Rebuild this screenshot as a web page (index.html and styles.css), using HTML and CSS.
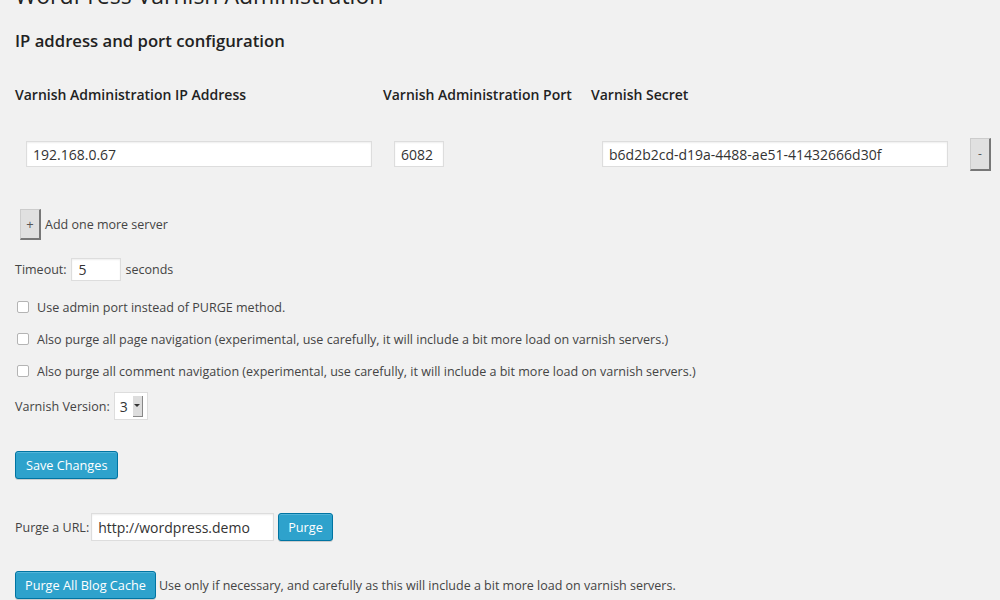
FILE: index.html
```html
<!DOCTYPE html>
<html>
<head>
<meta charset="utf-8">
<link rel="stylesheet" href="styles.css">
</head>
<body>
<div class="wrap">
  <h2 class="page-title">WordPress Varnish Administration</h2>
  <h3 class="section-title">IP address and port configuration</h3>
  <div class="servers">
    <div class="th">Varnish Administration IP Address</div>
    <div class="th">Varnish Administration Port</div>
    <div class="th">Varnish Secret</div>
    <div class="th"></div>
    <div class="td"><input class="field ip" type="text" value="192.168.0.67"></div>
    <div class="td"><input class="field port" type="text" value="6082"></div>
    <div class="td"><input class="field secret" type="text" value="b6d2b2cd-d19a-4488-ae51-41432666d30f"></div>
    <div class="td"><button class="gray-btn minus">-</button></div>
  </div>
  <div class="add-row">
    <button class="gray-btn plus">+</button>
    <span>Add one more server</span>
  </div>
  <div class="timeout-row">
    <span>Timeout:</span>
    <input class="field timeout" type="text" value="5">
    <span class="after">seconds</span>
  </div>
  <label class="check-row"><span class="box"></span><span class="opt">Use admin port instead of PURGE method.</span></label>
  <label class="check-row"><span class="box"></span><span class="opt">Also purge all page navigation (experimental, use carefully, it will include a bit more load on varnish servers.)</span></label>
  <label class="check-row"><span class="box"></span><span class="opt">Also purge all comment navigation (experimental, use carefully, it will include a bit more load on varnish servers.)</span></label>
  <div class="version-row">
    <span class="opt">Varnish Version:</span>
    <div class="select"><span class="val">3</span><span class="arrow"><span class="tri"></span></span></div>
  </div>
  <div class="save-row"><button class="blue-btn">Save Changes</button></div>
  <div class="purge-row">
    <span>Purge a URL:</span>
    <input class="field url" type="text" value="http://wordpress.demo">
    <button class="blue-btn">Purge</button>
  </div>
  <div class="purge-all-row">
    <button class="blue-btn">Purge All Blog Cache</button>
    <span>Use only if necessary, and carefully as this will include a bit more load on varnish servers.</span>
  </div>
</div>
</body>
</html>
```
FILE: styles.css
```css
html, body {
  margin: 0;
  padding: 0;
  background: #f1f1f1;
}
body {
  font-family: "Open Sans", sans-serif;
  font-size: 12.5px;
  color: #444;
  overflow: hidden;
  height: 600px;
}
.wrap {
  padding-left: 15px;
  margin-top: -19px;
}
.page-title {
  margin: 0;
  font-size: 23px;
  font-weight: 400;
  line-height: 29px;
  color: #222;
}
.section-title {
  margin: 19px 0 0;
  font-size: 16.7px;
  font-weight: 600;
  line-height: 24px;
  color: #222;
}
.servers {
  display: grid;
  grid-template-columns: 368px 208px 368px auto;
  margin-top: 32px;
}
.th {
  font-size: 14px;
  font-weight: 600;
  color: #222;
  line-height: 20px;
  height: 36px;
  padding-bottom: 16px;
}
.td {
  padding: 0 11px;
  display: flex;
  align-items: center;
  height: 34px;
}
.field {
  font-family: "Open Sans", sans-serif;
  font-size: 14px;
  color: #333;
  background: #fff;
  border: 1px solid #ddd;
  box-shadow: inset 0 1px 2px rgba(0,0,0,0.07);
  height: 26px;
  box-sizing: border-box;
  padding: 0 6px;
  margin: 0;
  outline: none;
}
.ip { width: 346px; }
.port { width: 50px; }
.secret { width: 347px; }
.gray-btn {
  font-family: "Open Sans", sans-serif;
  background: #e0e0e0;
  border: 1px solid #ccc;
  border-right: 2px solid #777;
  border-bottom: 2px solid #777;
  color: #555;
  padding: 0;
  margin: 0;
  box-sizing: border-box;
}
.minus {
  width: 21px;
  height: 33px;
  font-size: 12px;
  margin-left: 0;
}
.add-row {
  display: flex;
  align-items: center;
  margin-top: 38px;
  padding-left: 5px;
  gap: 4px;
}
.plus {
  width: 21px;
  height: 31px;
  font-size: 13px;
}
.timeout-row {
  display: flex;
  align-items: center;
  gap: 4px;
  margin-top: 18px;
}
.timeout-row .after { margin-left: 1px; }
.timeout {
  width: 50px;
  height: 23px;
  font-size: 14px;
  padding: 0 7px;
}
.check-row {
  display: flex;
  align-items: center;
  height: 20px;
  margin-top: 12px;
  padding-left: 2px;
}
.timeout-row + .check-row { margin-top: 16px; }
.box {
  width: 10px;
  height: 10px;
  border: 1px solid #b4b4b4;
  border-radius: 2px;
  background: #fff;
  margin-right: 8px;
  flex: none;
}
.opt {
  font-size: 12.55px;
}
.version-row {
  display: flex;
  align-items: center;
  gap: 4px;
  margin-top: 11px;
}
.select {
  display: flex;
  align-items: center;
  height: 28px;
  width: 34px;
  box-sizing: border-box;
  background: #fff;
  border: 1px solid #ddd;
  padding-left: 5px;
}
.val {
  font-size: 14px;
  color: #333;
  width: 13px;
}
.arrow {
  width: 9px;
  height: 20px;
  background: #ddd;
  border-right: 1px solid #888;
  border-bottom: 1px solid #888;
  display: flex;
  align-items: center;
  justify-content: center;
}
.tri {
  width: 0;
  height: 0;
  border-left: 3px solid transparent;
  border-right: 3px solid transparent;
  border-top: 3px solid #333;
}
.blue-btn {
  font-family: "Open Sans", sans-serif;
  font-size: 12.7px;
  color: #fff;
  background: #2ea2cc;
  border: 1px solid #0074a2;
  border-radius: 3px;
  box-shadow: inset 0 1px 0 rgba(120,200,230,0.5), 0 1px 0 rgba(0,0,0,0.15);
  height: 28px;
  padding: 0 10px;
  margin: 0;
  box-sizing: border-box;
}
.save-row { margin-top: 31px; }
.purge-row {
  display: flex;
  align-items: center;
  gap: 2px;
  margin-top: 34px;
}
.purge-row .blue-btn { padding: 0 9px; }
.url {
  width: 183px;
  height: 28px;
  font-size: 14px;
  padding: 0 6px;
  margin-right: 2px;
}
.purge-all-row {
  display: flex;
  align-items: center;
  gap: 3px;
  margin-top: 30px;
}
.purge-all-row .blue-btn { padding: 0 9px; }
```
